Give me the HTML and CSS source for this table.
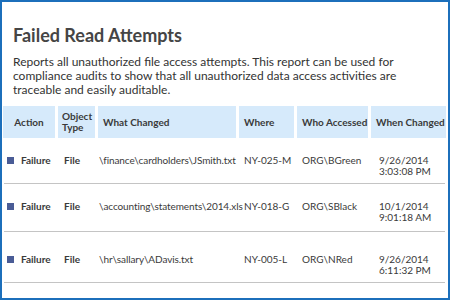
FILE: index.html
```html
<!DOCTYPE html>
<html lang="en">
  <head>
    <meta charset="UTF-8" />
    <title>Failed Read Attempts</title>
    <link rel="stylesheet" href="styles.css">
  </head>
  <body>
    <div class="report">
      <h1>Failed Read Attempts</h1>
      <p class="desc">
        Reports all unauthorized file access attempts. This report can be used for
        compliance audits to show that all unauthorized data access activities are
        traceable and easily auditable.
      </p>

      <div class="grid head">
        <div class="th th-action">Action</div>
        <div class="th th-type">Object<br />Type</div>
        <div class="th">What Changed</div>
        <div class="th">Where</div>
        <div class="th">Who Accessed</div>
        <div class="th">When Changed</div>
      </div>

      <div class="grid row">
        <div class="cell status"><span class="mark"></span>Failure</div>
        <div class="cell type">File</div>
        <div class="cell path">\finance\cardholders\JSmith.txt</div>
        <div class="cell">NY-025-M</div>
        <div class="cell">ORG\BGreen</div>
        <div class="cell date">9/26/2014<br />3:03:08 PM</div>
      </div>

      <div class="grid row">
        <div class="cell status"><span class="mark"></span>Failure</div>
        <div class="cell type">File</div>
        <div class="cell path">\accounting\statements\2014.xls</div>
        <div class="cell">NY-018-G</div>
        <div class="cell">ORG\SBlack</div>
        <div class="cell date">10/1/2014<br />9:01:18 AM</div>
      </div>

      <div class="grid row">
        <div class="cell status"><span class="mark"></span>Failure</div>
        <div class="cell type">File</div>
        <div class="cell path">\hr\sallary\ADavis.txt</div>
        <div class="cell">NY-005-L</div>
        <div class="cell">ORG\NRed</div>
        <div class="cell date">9/26/2014<br />6:11:32 PM</div>
      </div>
    </div>
  </body>
</html>
```

FILE: styles.css
```css
body {
  margin: 0;
  font-family: Lato, "Open Sans", sans-serif;
  color: #3a3a3a;
  background: #ffffff;
}
.report {
  box-sizing: border-box;
  width: 450px;
  height: 300px;
  border: 2px solid #1c6fbb;
  padding: 0 2px 0 1px;
  overflow: hidden;
}
h1 {
  margin: 21px 0 0 10px;
  font-size: 18px;
  font-weight: 700;
  line-height: 25px;
  color: #454545;
}
.desc {
  margin: 7px 0 0 10px;
  width: 410px;
  font-size: 12px;
  line-height: 14px;
  color: #333333;
}
.grid {
  display: grid;
  grid-template-columns: 52px 37px 138px 55px 71px 75px;
  column-gap: 3px;
}
.head {
  margin-top: 9px;
}
.th {
  height: 32px;
  display: flex;
  align-items: center;
  padding-left: 5px;
  background: #d6eafb;
  font-size: 10px;
  font-weight: 700;
  line-height: 11px;
  color: #3a3a3a;
  white-space: nowrap;
}
.th-action {
  justify-content: center;
  padding-left: 0;
}
.th-type {
  padding-left: 4px;
}
.row {
  height: 46px;
  margin: 0 1px;
  border-bottom: 1px solid #c4c4c4;
  box-sizing: border-box;
  padding-top: 17px;
}
.row + .row {
  height: 48px;
}
.row:last-child {
  height: 51px;
  padding-top: 22px;
}
.cell {
  font-size: 10px;
  line-height: 11px;
  padding-left: 4px;
  color: #3a3a3a;
  white-space: nowrap;
}
.status {
  display: flex;
  align-items: center;
  padding-left: 3px;
  font-weight: 700;
  height: 11px;
}
.mark {
  width: 7px;
  height: 7px;
  background: #4a5c96;
  margin-right: 7px;
}
.type {
  font-weight: 700;
  padding-left: 5px;
}
.path {
  padding-left: 0;
  letter-spacing: -0.1px;
}
.date {
  padding-left: 7px;
}
```
